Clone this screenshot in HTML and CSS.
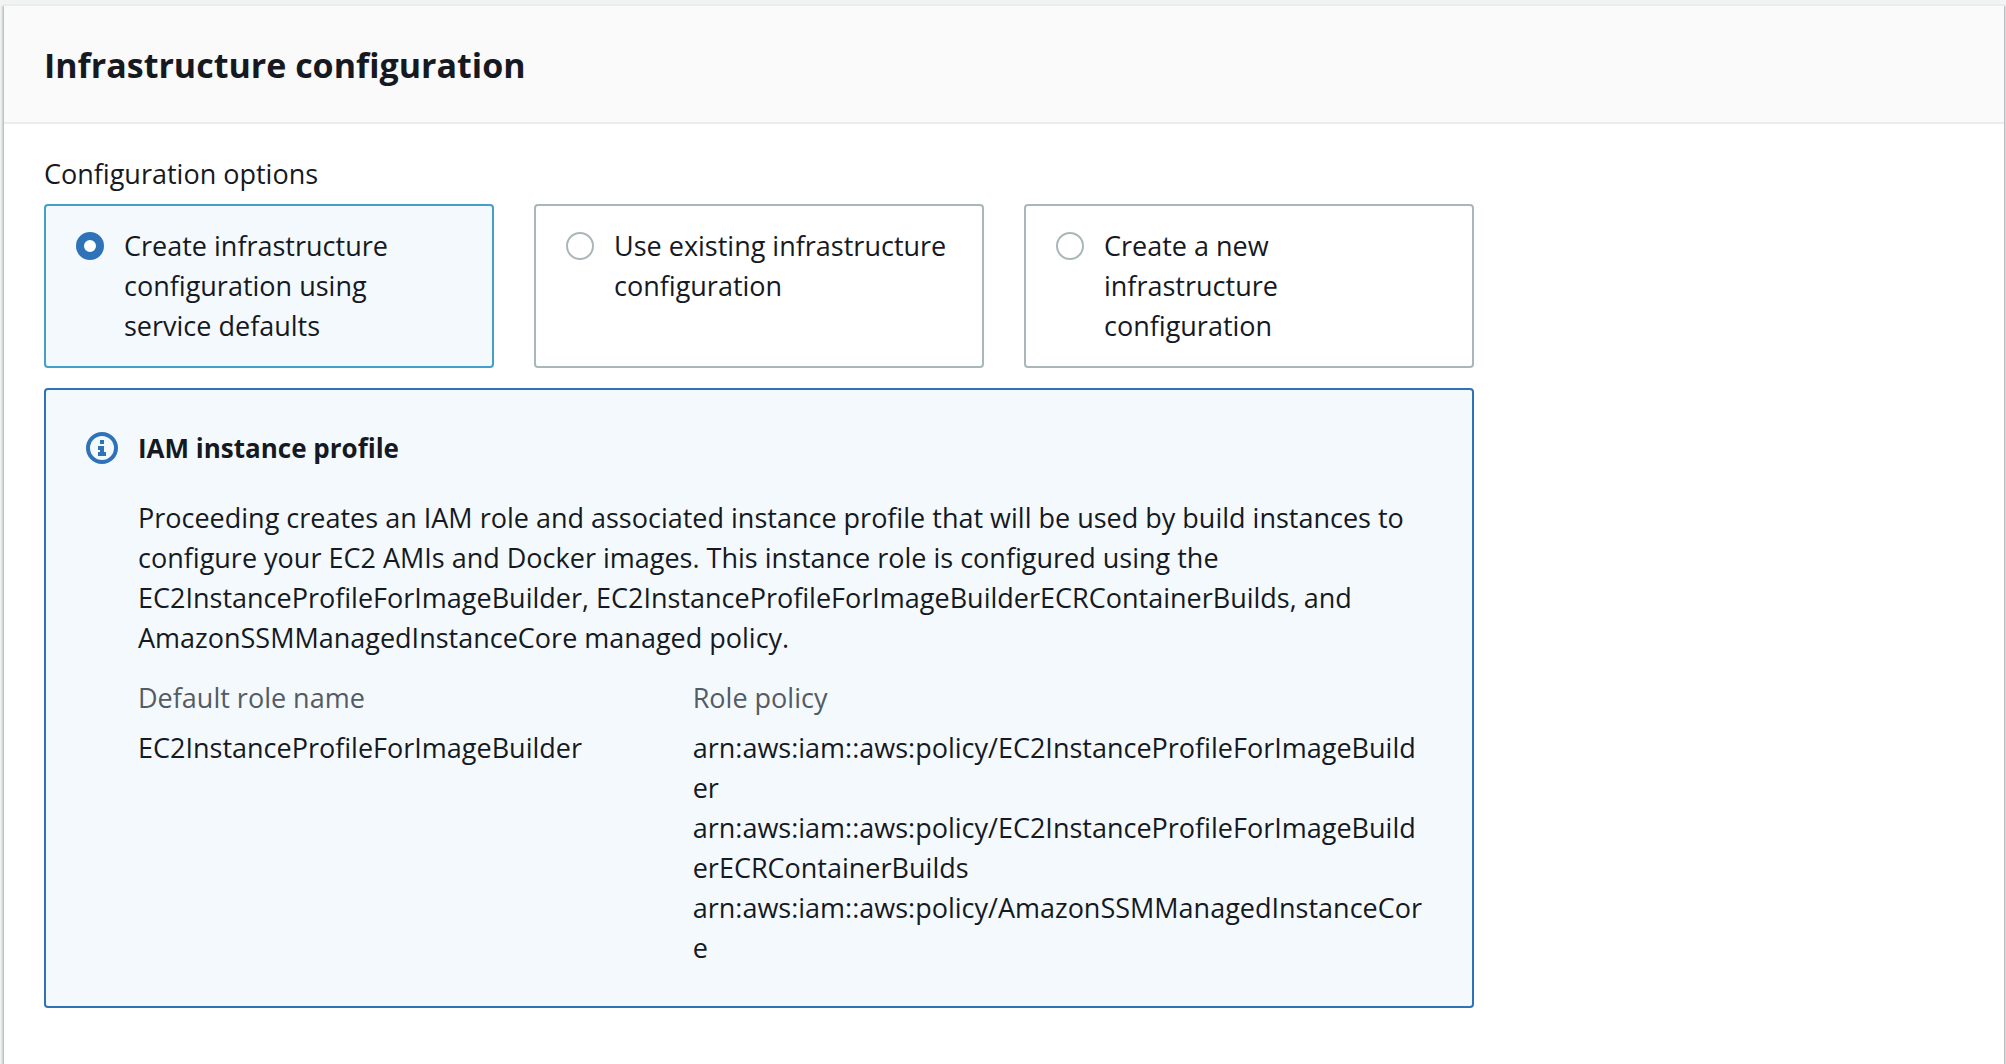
FILE: index.html
```html
<!DOCTYPE html>
<html lang="en">
<head>
<meta charset="utf-8">
<meta name="viewport" content="width=device-width, initial-scale=1">
<title>Infrastructure configuration</title>
<link rel="stylesheet" href="styles.css">
</head>
<body>
<main class="panel">
  <header class="panel-header">
    <h1 class="panel-title">Infrastructure configuration</h1>
  </header>
  <div class="panel-body">
    <fieldset class="options">
      <legend class="options-label">Configuration options</legend>
      <div class="tiles">
        <label class="tile">
          <input class="tile-radio" type="radio" name="configuration" value="defaults" checked>
          <span>Create infrastructure configuration using service defaults</span>
        </label>
        <label class="tile">
          <input class="tile-radio" type="radio" name="configuration" value="existing">
          <span>Use existing infrastructure configuration</span>
        </label>
        <label class="tile">
          <input class="tile-radio" type="radio" name="configuration" value="new">
          <span>Create a new infrastructure configuration</span>
        </label>
      </div>
    </fieldset>
    <section class="alert" aria-labelledby="alert-title">
      <svg class="alert-icon" viewBox="0 0 32 32" aria-hidden="true">
        <circle cx="16" cy="16" r="14" fill="none" stroke="currentColor" stroke-width="4"/>
        <path fill="currentColor" d="M14 8h4v4h-4zM12 14h6v6h2v4h-8v-4h2v-2h-2z"/>
      </svg>
      <div class="alert-content">
        <h2 class="alert-title" id="alert-title">IAM instance profile</h2>
        <p class="alert-text">Proceeding creates an IAM role and associated instance profile that will be used by build instances to configure your EC2 AMIs and Docker images. This instance role is configured using the EC2InstanceProfileForImageBuilder, EC2InstanceProfileForImageBuilderECRContainerBuilds, and AmazonSSMManagedInstanceCore managed policy.</p>
        <dl class="details">
          <div class="detail">
            <dt>Default role name</dt>
            <dd>EC2InstanceProfileForImageBuilder</dd>
          </div>
          <div class="detail">
            <dt>Role policy</dt>
            <dd>arn:aws:iam::aws:policy/EC2InstanceProfileForImageBuilder</dd>
            <dd>arn:aws:iam::aws:policy/EC2InstanceProfileForImageBuilderECRContainerBuilds</dd>
            <dd>arn:aws:iam::aws:policy/AmazonSSMManagedInstanceCore</dd>
          </div>
        </dl>
      </div>
    </section>
  </div>
</main>
</body>
</html>
```
FILE: styles.css
```css
* {
  box-sizing: border-box;
}

body {
  margin: 0;
  padding: 4px 2px 0 4px;
  background: #f2f3f3;
  color: #16191f;
  font: 27px/40px "Open Sans", "Noto Sans", sans-serif;
}

.panel {
  min-height: calc(100vh - 4px);
  background: #fff;
  border-top: 2px solid #eaeded;
  box-shadow:
    0 2px 2px rgba(0, 28, 36, 0.3),
    2px 2px 2px rgba(0, 28, 36, 0.15),
    -2px 2px 2px rgba(0, 28, 36, 0.15);
}

.panel-header {
  padding: 37px 40px 35px;
  background: #fafafa;
  border-bottom: 2px solid #eaeded;
}

.panel-title {
  margin: 0;
  font-size: 34px;
  line-height: 44px;
  font-weight: 700;
}

.panel-body {
  padding: 30px 40px 55px;
}

.options,
.alert {
  width: calc(75% - 10px);
}

.options {
  margin: 0 0 20px;
  padding: 0;
  border: 0;
}

.options-label {
  padding: 0;
  margin-bottom: 10px;
}

.tiles {
  display: grid;
  grid-template-columns: repeat(3, 1fr);
  gap: 40px;
}

.tile {
  display: flex;
  align-items: flex-start;
  gap: 20px;
  padding: 20px 32px 20px 30px;
  border: 2px solid #aab7b8;
  border-radius: 4px;
}

.tile:has(:checked) {
  background: #f3f9fd;
  border-color: #44a0c8;
}

.tile-radio {
  appearance: none;
  flex: none;
  width: 28px;
  height: 28px;
  margin: 6px 0 0;
  border: 2px solid #aab7b8;
  border-radius: 50%;
  background: #fff;
}

.tile-radio:checked {
  border: 8px solid #2e73b8;
}

.alert {
  display: flex;
  gap: 20px;
  padding: 38px 44px 38px 40px;
  background: #f3f9fd;
  border: 2px solid #2e73b8;
  border-radius: 4px;
}

.alert-icon {
  flex: none;
  width: 32px;
  height: 32px;
  margin-top: 4px;
  color: #2e73b8;
}

.alert-content {
  flex: 1;
  min-width: 0;
}

.alert-title {
  margin: 0 0 30px;
  font-size: 26px;
  line-height: 40px;
  font-weight: 700;
}

.alert-text {
  margin: 0 0 20px;
}

.details {
  display: grid;
  grid-template-columns: 43% 1fr;
  margin: 0;
}

.detail {
  min-width: 0;
}

.detail dt {
  margin-bottom: 10px;
  color: #545b64;
}

.detail dd {
  margin: 0;
  overflow-wrap: anywhere;
}
```
